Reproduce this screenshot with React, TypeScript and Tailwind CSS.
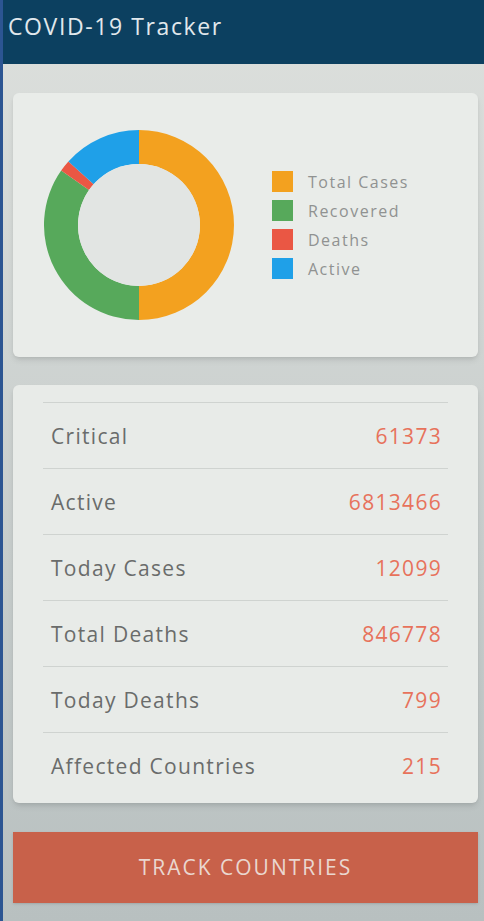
import React from 'react';

interface Slice {
  label: string;
  color: string;
  from: number;
  to: number;
}

const slices: Slice[] = [
  { label: 'Total Cases', color: '#f3a11f', from: 0, to: 180 },
  { label: 'Recovered', color: '#57a95b', from: 180, to: 305 },
  { label: 'Deaths', color: '#ea5744', from: 305, to: 312 },
  { label: 'Active', color: '#1fa0e8', from: 312, to: 360 },
];

const stats = [
  { label: 'Critical', value: '61373' },
  { label: 'Active', value: '6813466' },
  { label: 'Today Cases', value: '12099' },
  { label: 'Total Deaths', value: '846778' },
  { label: 'Today Deaths', value: '799' },
  { label: 'Affected Countries', value: '215' },
];

// point on circle, angle measured clockwise from 12 o'clock
const pt = (cx: number, cy: number, r: number, deg: number) => {
  const a = ((deg - 90) * Math.PI) / 180;
  return [cx + r * Math.cos(a), cy + r * Math.sin(a)];
};

const arcPath = (from: number, to: number, R: number, r: number, c: number) => {
  const [x1, y1] = pt(c, c, R, from);
  const [x2, y2] = pt(c, c, R, to);
  const [x3, y3] = pt(c, c, r, to);
  const [x4, y4] = pt(c, c, r, from);
  const large = to - from > 180 ? 1 : 0;
  return `M${x1} ${y1} A${R} ${R} 0 ${large} 1 ${x2} ${y2} L${x3} ${y3} A${r} ${r} 0 ${large} 0 ${x4} ${y4} Z`;
};

const Donut: React.FC = () => (
  <svg width="190" height="190" viewBox="0 0 190 190">
    {slices.map((s) => (
      <path key={s.label} d={arcPath(s.from, s.to, 95, 61, 95)} fill={s.color} />
    ))}
    <circle cx="95" cy="95" r="61" fill="#e2e5e3" />
  </svg>
);

const StatRow: React.FC<{ label: string; value: string }> = ({ label, value }) => (
  <div className="flex h-[66px] items-center justify-between border-t border-[#cfd3d0] pt-[3px] pl-2 pr-[6px] text-[21px] tracking-[1.3px]">
    <span className="text-[#6a6c6b]">{label}</span>
    <span className="text-[#e7725b]">{value}</span>
  </div>
);

export default function App() {
  return (
    <div
      className="min-h-[921px] w-[484px] border-l-[3px] border-[#2c5592] bg-gradient-to-b from-[#dde0dd] to-[#b8c0c0]"
      style={{ fontFamily: '"Open Sans", "Noto Sans", sans-serif' }}
    >
      <header className="h-[64px] bg-[#0c4060] pl-[5px] pt-[9px]">
        <h1 className="text-[23px] tracking-[1.6px] text-[#e1e8ec]">COVID-19 Tracker</h1>
      </header>

      <main className="flex flex-col gap-[28px] pl-[10px] pr-[6px] pt-[29px]">
        <section className="flex h-[264px] items-center rounded-md bg-[#e9ece9] pl-[31px] shadow-md">
          <Donut />
          <ul className="ml-[38px] flex flex-col gap-[8px]">
            {slices.map((s) => (
              <li key={s.label} className="flex h-[21px] items-center gap-[15px]">
                <span className="h-[21px] w-[21px]" style={{ backgroundColor: s.color }} />
                <span className="text-[16px] tracking-[1.5px] text-[#909291]">{s.label}</span>
              </li>
            ))}
          </ul>
        </section>

        <section className="rounded-md bg-[#e8ebe8] px-[30px] pt-[17px] pb-[5px] shadow-md">
          {stats.map((s) => (
            <StatRow key={s.label} label={s.label} value={s.value} />
          ))}
        </section>

        <button className="mt-[1px] h-[71px] w-full bg-[#c8614a] text-[21px] tracking-[2px] text-[#ead7d0] shadow">
          TRACK COUNTRIES
        </button>
      </main>
    </div>
  );
}
